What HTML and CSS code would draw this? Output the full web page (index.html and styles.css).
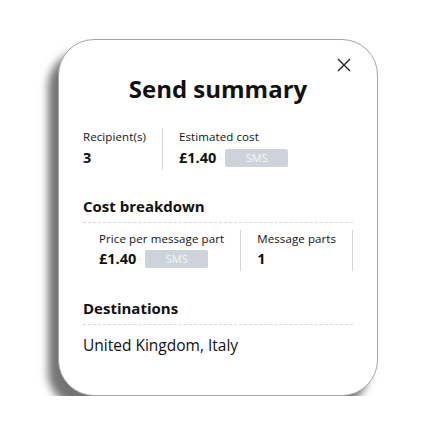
FILE: index.html
```html
<!DOCTYPE html>
<html lang="en">
<head>
  <meta charset="UTF-8" />
  <title>Send summary</title>
  <link rel="stylesheet" href="styles.css">
</head>
<body>
  <div class="stage">
    <section class="modal">
      <button class="fechar" aria-label="Close">
        <svg width="14" height="14" viewBox="0 0 14 14"><path d="M1 1L13 13M13 1L1 13" stroke="#222" stroke-width="1.4" fill="none"/></svg>
      </button>
      <h1>Send summary</h1>

      <div class="resumo">
        <div class="celula">
          <span class="rotulo">Recipient(s)</span>
          <span class="valor">3</span>
        </div>
        <div class="celula">
          <span class="rotulo">Estimated cost</span>
          <span class="valor">£1.40 <span class="tag">SMS</span></span>
        </div>
      </div>

      <h2>Cost breakdown</h2>
      <div class="detalhe">
        <div class="celula">
          <span class="rotulo">Price per message part</span>
          <span class="valor">£1.40 <span class="tag">SMS</span></span>
        </div>
        <div class="celula">
          <span class="rotulo">Message parts</span>
          <span class="valor">1</span>
        </div>
      </div>

      <h2>Destinations</h2>
      <p class="destinos">United Kingdom, Italy</p>
    </section>
  </div>
</body>
</html>
```

FILE: styles.css
```css
* { box-sizing: border-box; }
body {
  margin: 0;
  background: #fff;
  font-family: 'Open Sans', sans-serif;
  color: #111;
}
.stage {
  padding: 39px 0 0 58px;
}
.modal {
  position: relative;
  width: 320px;
  height: 357px;
  background: #fff;
  border: 1px solid #aaa2a6;
  border-radius: 36px;
  box-shadow: -10px 12px 8px rgba(0, 0, 0, 0.55);
  padding: 34px 24px 0 24px;
}
.fechar {
  position: absolute;
  top: 18px;
  right: 26px;
  background: none;
  border: none;
  padding: 0;
  width: 14px;
  height: 14px;
  cursor: pointer;
}
.fechar svg { display: block; }
h1 {
  margin: 0;
  text-align: center;
  font-size: 24px;
  font-weight: 700;
  line-height: 30px;
}
.resumo, .detalhe {
  display: flex;
}
.resumo {
  margin-top: 24px;
}
.celula {
  display: flex;
  flex-direction: column;
  flex-shrink: 0;
  border-right: 1px solid #d6d6d6;
  padding: 0 16px 1px;
  white-space: nowrap;
}
.resumo .celula:first-child { padding-left: 0; }
.resumo .celula:last-child { border-right: none; }
.rotulo {
  font-size: 11.5px;
  letter-spacing: 0.1px;
  line-height: 16px;
  margin-top: 1px;
}
.valor {
  font-size: 14.5px;
  font-weight: 700;
  line-height: 22px;
  margin-top: 2px;
  display: flex;
  align-items: center;
  gap: 9px;
}
.detalhe .valor {
  margin-top: 1px;
}
.tag {
  display: inline-block;
  width: 63px;
  height: 18px;
  line-height: 18px;
  background: #cdd3da;
  color: #f5f7f9;
  font-size: 11px;
  font-weight: 400;
  text-align: center;
  border-radius: 2px;
}
h2 {
  margin: 25px 0 0;
  font-size: 15px;
  font-weight: 700;
  line-height: 22px;
  padding-bottom: 5px;
  border-bottom: 1px dashed #d8d8d8;
}
.detalhe {
  padding-top: 7px;
}
.detalhe + h2 {
  margin-top: 26px;
}
.destinos {
  margin: 9px 0 0;
  font-size: 15.5px;
  line-height: 22px;
}
```
